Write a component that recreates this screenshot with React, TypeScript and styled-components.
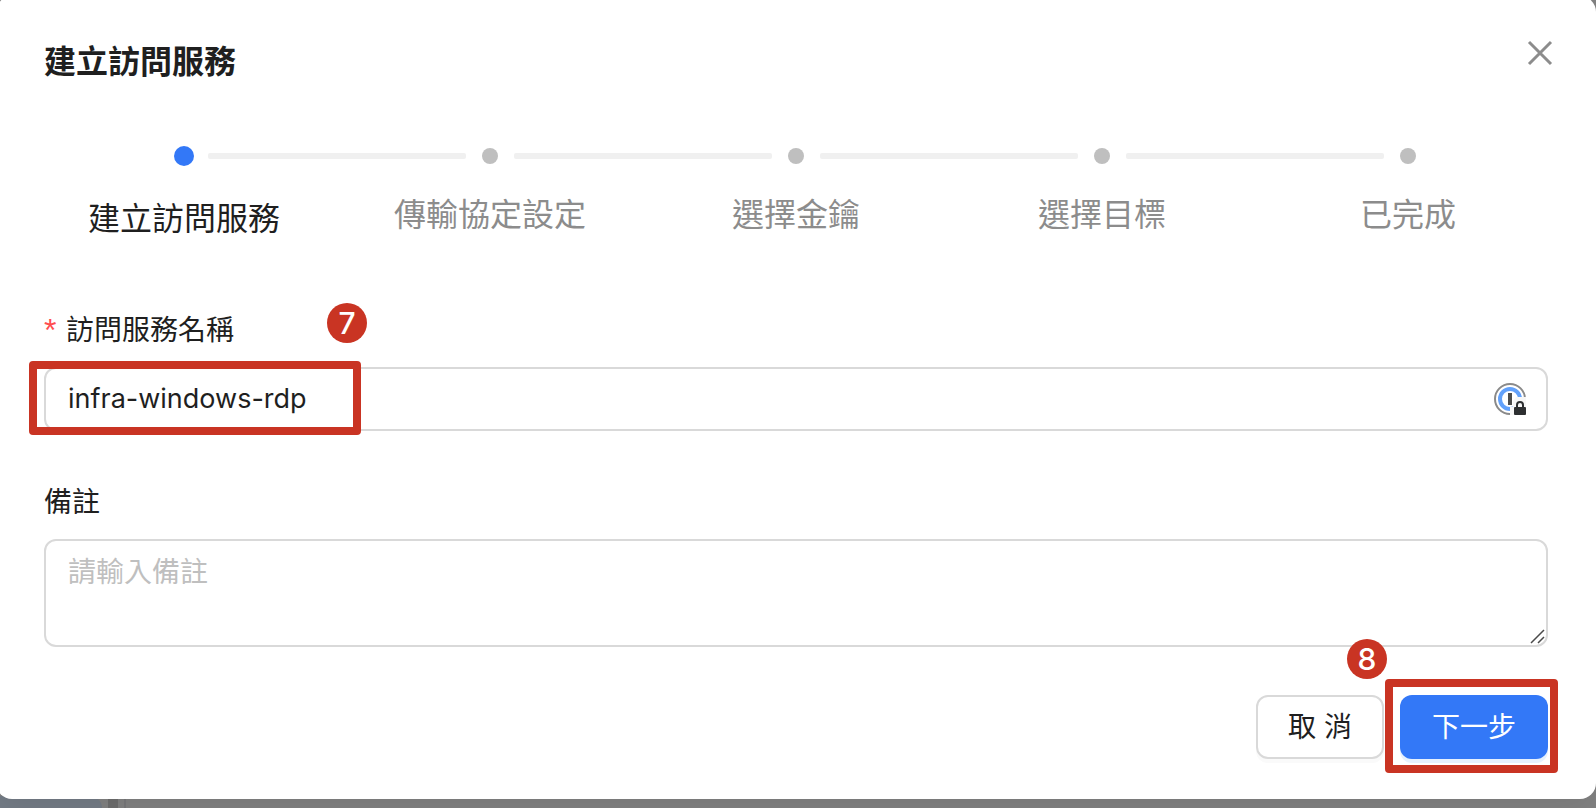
import React from "react";
import styled, { createGlobalStyle } from "styled-components";

const GlobalStyle = createGlobalStyle`
  *, *::before, *::after { box-sizing: border-box; }
  html { background: #7f7f7f; }
  body {
    margin: 0;
    overflow: hidden;
    color: #1f1f1f;
    font: 28px/44px Inter, "Noto Sans CJK TC", sans-serif;
  }
  button, input, textarea { font: inherit; color: inherit; }
`;

const Page = styled.div`
  position: relative;
  display: flow-root;
  min-height: 100vh;
  background: #7f7f7f;
`;

const Backdrop = styled.div`
  position: absolute;
  inset: 0;
  display: flex;
  background: #828282;
`;

const MenuItem = styled.div`
  align-self: flex-end;
  width: 102px;
  height: 12px;
  background: #747c86;
  border-top-right-radius: 12px;
`;

const Strip = styled.div<{ $width: number; $color: string }>`
  width: ${(p) => p.$width}px;
  background: ${(p) => p.$color};
`;

const Dialog = styled.section`
  position: relative;
  margin: -4px 0 0 -4px;
  padding: 42px 48px 40px;
  border-radius: 16px;
  background: #fff;
  box-shadow: 0 12px 32px rgba(0, 0, 0, 0.08);
`;

const Header = styled.header`
  display: flex;
  align-items: flex-start;
  justify-content: space-between;
  height: 108px;
`;

const Title = styled.h1`
  margin: 0;
  font-size: 32px;
  font-weight: 700;
  line-height: 48px;
`;

const CloseButton = styled.button`
  display: flex;
  align-items: center;
  justify-content: center;
  width: 44px;
  height: 30px;
  margin-right: -14px;
  padding: 0;
  border: 0;
  background: none;
  color: #8c8c8c;
`;

const Steps = styled.ol`
  display: flex;
  height: 161px;
  margin: 0;
  padding: 0;
  list-style: none;
`;

const Step = styled.li<{ $active?: boolean }>`
  flex: 1;
  color: ${(p) => (p.$active ? "#1f1f1f" : "#8c8c8c")};

  &:last-child {
    flex: none;
    width: 280px;
  }
`;

const Rail = styled.div<{ $active?: boolean }>`
  display: flex;
  align-items: center;
  height: 20px;
  margin-right: -116px;
  padding-left: ${(p) => (p.$active ? 130 : 132)}px;
`;

const Dot = styled.span<{ $active?: boolean }>`
  flex: none;
  width: ${(p) => (p.$active ? 20 : 16)}px;
  height: ${(p) => (p.$active ? 20 : 16)}px;
  margin-right: ${(p) => (p.$active ? 14 : 16)}px;
  border-radius: 50%;
  background: ${(p) => (p.$active ? "#3378f7" : "#bfbfbf")};
`;

const Line = styled.span`
  flex: 1;
  height: 6px;
  border-radius: 2px;
  background: #f0f0f0;
`;

const StepLabel = styled.div<{ $active?: boolean }>`
  width: 280px;
  padding-top: ${(p) => (p.$active ? 29 : 25)}px;
  font-size: 32px;
  line-height: 48px;
  text-align: center;
`;

const Field = styled.div`
  position: relative;
  display: flex;
  flex-direction: column;
`;

const Label = styled.label`
  display: flex;
  align-items: center;
  gap: 8px;
  height: 60px;
  padding-bottom: 14px;
`;

const Required = styled.span`
  width: 14px;
  color: #ff4d4f;
  font-family: "Liberation Sans", sans-serif;
  font-size: 32px;
`;

const InputBox = styled.div`
  display: flex;
  align-items: center;
  height: 64px;
  margin-bottom: 48px;
  padding: 0 20px 0 22px;
  border: 2px solid #d9d9d9;
  border-radius: 12px;
`;

const TextInput = styled.input`
  && { font-size: 27px; }
  flex: 1;
  min-width: 0;
  padding: 0;
  border: 0;
  outline: 0;
  background: none;
`;

const TextArea = styled.textarea`
  width: 100%;
  height: 108px;
  padding: 9px 22px;
  border: 2px solid #d9d9d9;
  border-radius: 12px;
  background: #fff;
  outline: 0;
  resize: none;

  &::placeholder { color: #bfbfbf; }
`;

const Grip = styled.svg`
  position: absolute;
  right: 3px;
  bottom: 3px;
`;

const Footer = styled.footer`
  display: flex;
  justify-content: flex-end;
  gap: 16px;
  margin-top: 48px;
`;

const Slot = styled.div`
  position: relative;
`;

const Button = styled.button<{ $primary?: boolean }>`
  display: block;
  height: 64px;
  padding: 0 ${(p) => (p.$primary ? 32 : 30)}px;
  border: ${(p) => (p.$primary ? "0" : "2px solid #d9d9d9")};
  border-radius: 12px;
  background: ${(p) => (p.$primary ? "#3378f7" : "#fff")};
  box-shadow: 0 4px 0 ${(p) => (p.$primary ? "#e6f1fe" : "#fafafa")};
  color: ${(p) => (p.$primary ? "#fff" : "#1f1f1f")};
  white-space: nowrap;
`;

const Highlight = styled.div<{ $inset: string; $width?: number }>`
  position: absolute;
  inset: ${(p) => p.$inset};
  width: ${(p) => (p.$width ? `${p.$width}px` : "auto")};
  border: 8px solid #c93423;
  border-radius: 4px;
  pointer-events: none;
`;

const Callout = styled.span<{ $top: number; $left: number }>`
  position: absolute;
  top: ${(p) => p.$top}px;
  left: ${(p) => p.$left}px;
  width: 40px;
  height: 40px;
  border-radius: 50%;
  background: #c93423;
  color: #fff;
  font-size: 30px;
  font-weight: 500;
  line-height: 40px;
  text-align: center;
`;

const steps = ["建立訪問服務", "傳輸協定設定", "選擇金鑰", "選擇目標", "已完成"];

const PasswordIcon = () => (
  <svg width="32" height="32" viewBox="0 0 32 32" aria-hidden="true">
    <circle cx="16" cy="16" r="15" fill="#fff" stroke="#8a8a8a" strokeWidth="2" />
    <circle cx="16" cy="16" r="10" fill="#fff" stroke="#62a1fb" strokeWidth="4" />
    <path d="M16 32V24h3v-6l3-4h10v18z" fill="#f7f7f7" />
    <path d="M14 10h4v12h-4z" fill="#4c4c4c" />
    <path d="M23 25v-3a3 3 0 0 1 6 0v3" fill="none" stroke="#2d2f31" strokeWidth="2" />
    <rect x="20" y="24" width="12" height="8" rx="1" fill="#2d2f31" />
  </svg>
);

export default function App() {
  return (
    <Page>
      <GlobalStyle />
      <Backdrop>
        <MenuItem />
        <Strip $width={6} $color="#828282" />
        <Strip $width={10} $color="#6e6e6e" />
        <Strip $width={6} $color="#828282" />
        <Strip $width={2} $color="#78787a" />
      </Backdrop>
      <Dialog role="dialog" aria-labelledby="dialog-title">
        <Header>
          <Title id="dialog-title">建立訪問服務</Title>
          <CloseButton type="button" aria-label="關閉">
            <svg width="26" height="26" viewBox="0 0 26 26" stroke="currentColor" strokeWidth="3">
              <path d="M2 2l22 22M24 2L2 24" />
            </svg>
          </CloseButton>
        </Header>
        <Steps>
          {steps.map((name, i) => (
            <Step key={name} $active={i === 0} aria-current={i === 0 ? "step" : undefined}>
              <Rail $active={i === 0}>
                <Dot $active={i === 0} />
                {i < steps.length - 1 && <Line />}
              </Rail>
              <StepLabel $active={i === 0}>{name}</StepLabel>
            </Step>
          ))}
        </Steps>
        <Field>
          <Label htmlFor="service-name">
            <Required>*</Required>訪問服務名稱
          </Label>
          <InputBox>
            <TextInput id="service-name" defaultValue="infra-windows-rdp" />
            <PasswordIcon />
          </InputBox>
          <Highlight $inset="54px auto 44px -15px" $width={332} />
          <Callout $top={-4} $left={283}>7</Callout>
        </Field>
        <Field>
          <Label htmlFor="remark">備註</Label>
          <TextArea id="remark" placeholder="請輸入備註" />
          <Grip width="15" height="15" viewBox="0 0 15 15" stroke="#4a4a4a" strokeWidth="1.5">
            <path d="M1 14L14 1M8 14l6-6" />
          </Grip>
        </Field>
        <Footer>
          <Button type="button">取 消</Button>
          <Slot>
            <Button type="button" $primary>下一步</Button>
            <Highlight $inset="-16px -10px -14px -15px" />
            <Callout $top={-56} $left={-53}>8</Callout>
          </Slot>
        </Footer>
      </Dialog>
    </Page>
  );
}
